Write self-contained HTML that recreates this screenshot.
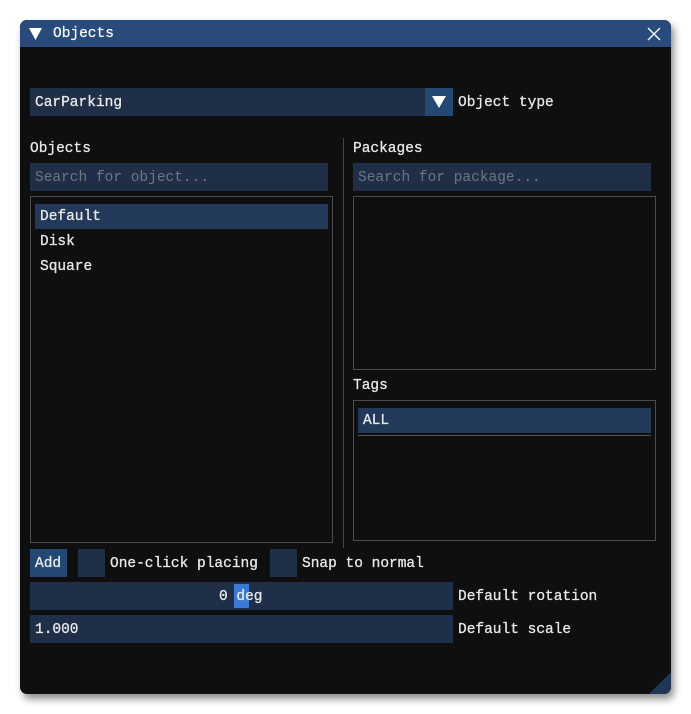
<!DOCTYPE html>
<html><head><style>
*{margin:0;padding:0;box-sizing:border-box}
body{width:691px;height:714px;background:#fff;position:relative;overflow:hidden;font-family:"Liberation Mono",monospace;font-size:14.5px;color:#e8e8e8}
.a{position:absolute}
.win{left:20px;top:20px;width:651px;height:674px;background:#0f0f0f;border-radius:7px;box-shadow:3px 5px 8px rgba(0,0,0,.45);overflow:hidden}
.tb{left:0;top:0;width:651px;height:27px;background:#294a7a}
.f{background:#1f2f48}
.t{line-height:30px;white-space:pre;-webkit-text-stroke:0.3px #e8e8e8}
.ph{color:#6f7680;-webkit-text-stroke:0}
.box{border:1px solid #4a4a52}
</style></head><body>
<div class="a win">
 <div class="a tb"></div>
 <svg class="a" style="left:9px;top:8px" width="13" height="12"><path d="M0 0H13L6.5 12Z" fill="#fff"/></svg>
 <div class="a t" style="left:33px;top:0;line-height:29px;color:#fff">Objects</div>
 <svg class="a" style="left:627px;top:7px" width="14" height="14"><path d="M1 1L13 13M13 1L1 13" stroke="#fff" stroke-width="1.4"/></svg>
 <div class="a f" style="left:10px;top:68px;width:395px;height:28px"></div>
 <div class="a" style="left:405px;top:68px;width:28px;height:28px;background:#234874"></div>
 <svg class="a" style="left:411px;top:75px" width="16" height="13"><path d="M1 1H15L8 13Z" fill="#fff"/></svg>
 <div class="a t" style="left:15px;top:68px">CarParking</div>
 <div class="a t" style="left:438px;top:68px">Object type</div>
 <div class="a t" style="left:10px;top:114px">Objects</div>
 <div class="a" style="left:323px;top:118px;width:1px;height:410px;background:#444"></div>
 <div class="a f" style="left:10px;top:143px;width:298px;height:28px"></div>
 <div class="a t ph" style="left:15px;top:143px">Search for object...</div>
 <div class="a box" style="left:10px;top:176px;width:303px;height:347px"></div>
 <div class="a" style="left:15px;top:184px;width:293px;height:25px;background:#22395a"></div>
 <div class="a t" style="left:20px;top:182px">Default</div>
 <div class="a t" style="left:20px;top:207px">Disk</div>
 <div class="a t" style="left:20px;top:232px">Square</div>
 <div class="a t" style="left:333px;top:114px">Packages</div>
 <div class="a f" style="left:333px;top:143px;width:298px;height:28px"></div>
 <div class="a t ph" style="left:338px;top:143px">Search for package...</div>
 <div class="a box" style="left:333px;top:176px;width:303px;height:174px"></div>
 <div class="a t" style="left:333px;top:351px">Tags</div>
 <div class="a box" style="left:333px;top:380px;width:303px;height:141px"></div>
 <div class="a" style="left:338px;top:388px;width:293px;height:25px;background:#22395a"></div>
 <div class="a" style="left:338px;top:415px;width:293px;height:1px;background:#555"></div>
 <div class="a t" style="left:343px;top:386px">ALL</div>
 <div class="a" style="left:10px;top:529px;width:37px;height:28px;background:#234874"></div>
 <div class="a t" style="left:15px;top:529px">Add</div>
 <div class="a f" style="left:58px;top:529px;width:27px;height:28px"></div>
 <div class="a t" style="left:90px;top:529px">One-click placing</div>
 <div class="a f" style="left:250px;top:529px;width:27px;height:28px"></div>
 <div class="a t" style="left:282px;top:529px">Snap to normal</div>
 <div class="a f" style="left:10px;top:562px;width:423px;height:28px"></div>
 <div class="a" style="left:214px;top:564px;width:15px;height:24px;background:#3a7ad6"></div>
 <div class="a t" style="left:199px;top:562px">0 deg</div>
 <div class="a t" style="left:438px;top:562px">Default rotation</div>
 <div class="a f" style="left:10px;top:595px;width:423px;height:28px"></div>
 <div class="a t" style="left:15px;top:595px">1.000</div>
 <div class="a t" style="left:438px;top:595px">Default scale</div>
 <svg class="a" style="left:629px;top:652px" width="22" height="22"><path d="M22 0V22H0Z" fill="#1f3656"/></svg>
</div>
</body></html>
